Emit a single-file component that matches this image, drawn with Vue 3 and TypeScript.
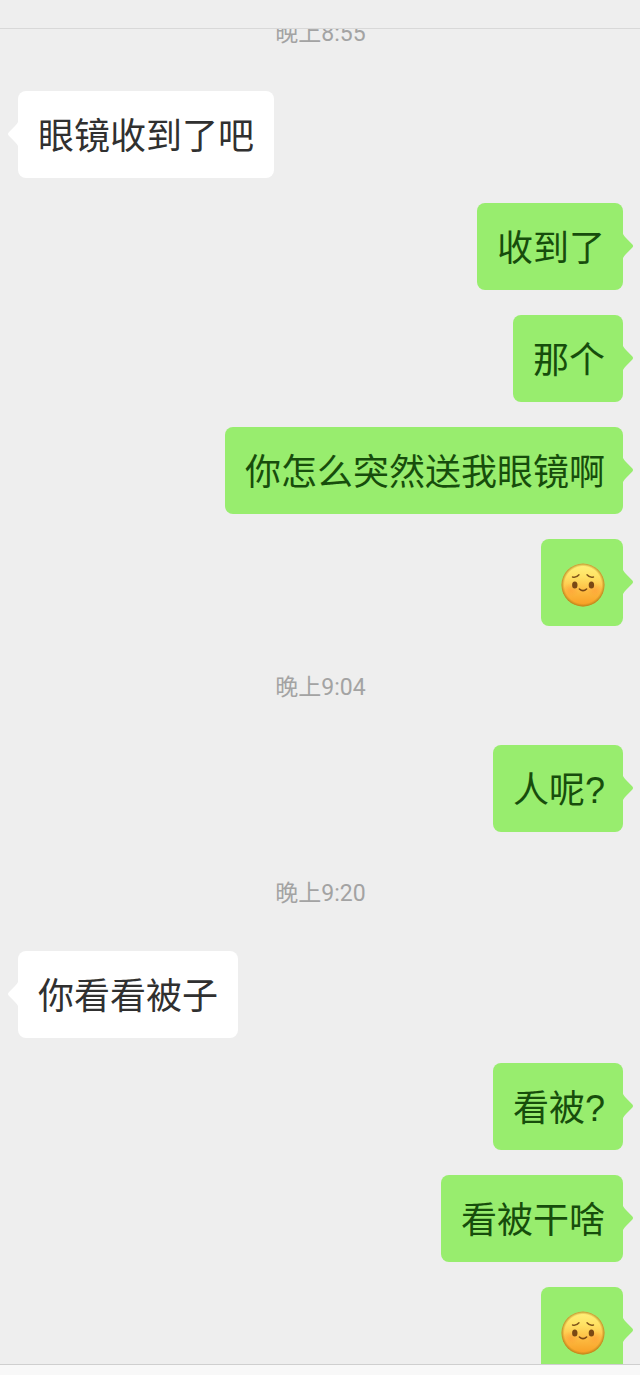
<script setup lang="ts">
type Entry =
  | { id: number; kind: 'time'; text: string }
  | { id: number; kind: 'text'; from: 'me' | 'friend'; text: string }
  | { id: number; kind: 'emoji'; from: 'me' | 'friend'; label: string }

const entries: Entry[] = [
  { id: 1, kind: 'time', text: '晚上8:55' },
  { id: 2, kind: 'text', from: 'friend', text: '眼镜收到了吧' },
  { id: 3, kind: 'text', from: 'me', text: '收到了' },
  { id: 4, kind: 'text', from: 'me', text: '那个' },
  { id: 5, kind: 'text', from: 'me', text: '你怎么突然送我眼镜啊' },
  { id: 6, kind: 'emoji', from: 'me', label: '害羞' },
  { id: 7, kind: 'time', text: '晚上9:04' },
  { id: 8, kind: 'text', from: 'me', text: '人呢?' },
  { id: 9, kind: 'time', text: '晚上9:20' },
  { id: 10, kind: 'text', from: 'friend', text: '你看看被子' },
  { id: 11, kind: 'text', from: 'me', text: '看被?' },
  { id: 12, kind: 'text', from: 'me', text: '看被干啥' },
  { id: 13, kind: 'emoji', from: 'me', label: '害羞' },
]
</script>

<template>
  <div class="chat">
    <header class="topbar"></header>
    <main class="history">
      <ul class="list">
        <li
          v-for="entry in entries"
          :key="entry.id"
          :class="entry.kind === 'time' ? 'stamp' : ['message', entry.from]"
        >
          <time v-if="entry.kind === 'time'">{{ entry.text }}</time>
          <div v-else class="bubble">
            <svg class="tail" viewBox="0 0 11 24" aria-hidden="true">
              <path d="M0 0 Q1 2 3 4 L9.4 10.6 Q10.8 12 9.4 13.4 L3 20 Q1 22 0 24Z" />
            </svg>
            <span v-if="entry.kind === 'text'">{{ entry.text }}</span>
            <svg v-else class="emoji" viewBox="0 0 44 44" role="img" :aria-label="entry.label">
              <defs>
                <linearGradient :id="`face-${entry.id}`" x1="0" y1="0" x2="0" y2="1">
                  <stop offset="0" stop-color="#fff27c" />
                  <stop offset="0.3" stop-color="#ffe264" />
                  <stop offset="0.65" stop-color="#fdba40" />
                  <stop offset="1" stop-color="#f79c22" />
                </linearGradient>
                <radialGradient :id="`rim-${entry.id}`">
                  <stop offset="0.86" stop-color="#c08a18" stop-opacity="0" />
                  <stop offset="1" stop-color="#a57a18" stop-opacity="0.8" />
                </radialGradient>
                <radialGradient :id="`blush-${entry.id}`">
                  <stop offset="0" stop-color="#ff9434" stop-opacity="0.5" />
                  <stop offset="1" stop-color="#ff9434" stop-opacity="0" />
                </radialGradient>
              </defs>
              <circle cx="22" cy="22" r="21.5" :fill="`url(#face-${entry.id})`" />
              <ellipse cx="10" cy="27" rx="8" ry="7" :fill="`url(#blush-${entry.id})`" />
              <ellipse cx="34" cy="27" rx="8" ry="7" :fill="`url(#blush-${entry.id})`" />
              <circle cx="22" cy="22" r="21.5" :fill="`url(#rim-${entry.id})`" />
              <path
                d="M11.5 14 Q15.5 15 18 11.8 M26 11.8 Q28.5 15 32.5 14"
                fill="none"
                stroke="#80551a"
                stroke-width="1.4"
                stroke-linecap="round"
              />
              <ellipse cx="13.8" cy="22" rx="2.7" ry="3.5" fill="#7a4814" />
              <ellipse cx="30.4" cy="22" rx="2.7" ry="3.5" fill="#7a4814" />
              <path
                d="M18.4 26 Q22 29.4 25.6 26"
                fill="none"
                stroke="#7a4814"
                stroke-width="1.6"
                stroke-linecap="round"
              />
            </svg>
          </div>
        </li>
      </ul>
    </main>
    <footer class="bottombar"></footer>
  </div>
</template>

<style>
body {
  margin: 0;
  background: #eeeeee;
}
</style>

<style scoped>
.chat {
  display: flex;
  flex-direction: column;
  height: 100vh;
  background: #eeeeee;
  font-family: "Liberation Sans", "Noto Sans CJK SC", sans-serif;
}

.topbar {
  flex: none;
  height: 28px;
  border-bottom: 1px solid #d8d8d8;
}

.history {
  flex: 1;
  min-height: 0;
  overflow: hidden;
}

.bottombar {
  flex: none;
  height: 10px;
  border-top: 1px solid #cfcfcf;
  background: #f8f8f8;
}

/* The oldest timestamp is scrolled partly under the top bar. */
.list {
  display: flex;
  flex-direction: column;
  gap: 25px;
  margin: -32px 0 0;
  padding: 0 17px 0 18px;
  list-style: none;
}

.stamp {
  padding: 21px 0 16px;
  color: #a3a3a3;
  font-family: Roboto, "Noto Sans CJK SC", sans-serif;
  font-size: 23px;
  line-height: 32px;
  text-align: center;
}

.message {
  display: flex;
}

.bubble {
  position: relative;
  display: flex;
  align-items: center;
  box-sizing: border-box;
  min-height: 87px;
  padding: 20px 20px 15px;
  border-radius: 8px;
  background: #ffffff;
  color: #303030;
  font-size: 36px;
  line-height: 52px;
}

.me {
  justify-content: flex-end;
}

.me .bubble {
  padding-right: 18px;
  background: #98ed6e;
  color: #174d0c;
}

.tail {
  position: absolute;
  top: 31px;
  right: 100%;
  width: 11px;
  height: 24px;
  fill: #ffffff;
  transform: scaleX(-1);
}

.me .tail {
  right: auto;
  left: 100%;
  fill: #98ed6e;
  transform: none;
}

.emoji {
  display: block;
  width: 44px;
  height: 44px;
}
</style>
